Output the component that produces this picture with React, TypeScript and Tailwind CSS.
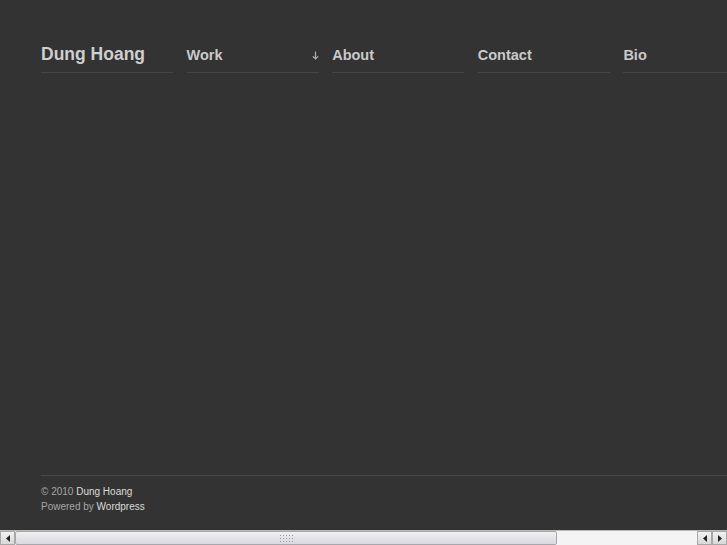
export default function App() {
  const nav = ["Work", "About", "Contact", "Bio", ""];

  return (
    <div className="w-[727px] h-[545px] overflow-hidden flex flex-col bg-[#333333]">
      <div className="h-[530px] overflow-hidden">
        <div
          className="w-[914px] h-[530px] bg-[#333333] flex flex-col pl-[41px]"
          style={{ fontFamily: '"Liberation Sans", Arial, sans-serif' }}
        >
          {/* Header */}
          <header className="pt-[44px] grid grid-cols-[repeat(6,132px)] gap-x-[13.6px]">
            <div className="border-b border-[#464646] pb-[8px]">
              <span className="block text-[17.5px] leading-[20px] font-bold text-[#cfcfcf]">Dung Hoang</span>
            </div>
            {nav.map((item, i) => (
              <div key={i} className="border-b border-[#464646] pb-[7px] pt-[1px] flex items-center justify-between">
                <span className="text-[14.5px] leading-[20px] font-bold text-[#c9c9c9]">{item}&nbsp;</span>
                {item === "Work" && (
                  <svg width="7" height="9" viewBox="0 0 7 9" className="mt-[1px]">
                    <path d="M3.5 0.5V8M0.8 5.3L3.5 8L6.2 5.3" stroke="#b0b0b0" strokeWidth="1.2" fill="none" />
                  </svg>
                )}
              </div>
            ))}
          </header>

          <div className="flex-1" />

          {/* Footer */}
          <footer className="border-t border-[#484848] pt-[8px] pb-[16px] text-[10px] leading-[15px] text-[#a6a6a6]">
            <p>
              © 2010 <span className="text-[#dcdcdc]">Dung Hoang</span>
            </p>
            <p>
              Powered by <span className="text-[#dcdcdc]">Wordpress</span>
            </p>
          </footer>
        </div>
      </div>

      {/* horizontal scrollbar */}
      <div className="h-[15px] flex bg-[#f4f4f4] border-t border-[#b8b8b8]">
        <div className="w-[15px] flex items-center justify-center bg-gradient-to-b from-[#f2f2f2] to-[#d8d8d8] border border-[#a8a8a8]">
          <svg width="4" height="7" viewBox="0 0 4 7"><path d="M4 0L0 3.5L4 7Z" fill="#222" /></svg>
        </div>
        <div className="flex-1 flex">
          <div className="w-[542px] flex items-center justify-center bg-gradient-to-b from-[#f0f0f2] to-[#d9d9de] border border-[#a8a8ac] rounded-[2px]">
            <div className="grid grid-cols-5 gap-[2px]">
              {Array.from({ length: 15 }).map((_, i) => (
                <div key={i} className="w-[1px] h-[1px] bg-[#9a9a9a]" />
              ))}
            </div>
          </div>
        </div>
        <div className="w-[15px] flex items-center justify-center bg-gradient-to-b from-[#f2f2f2] to-[#d8d8d8] border border-[#a8a8a8]">
          <svg width="4" height="7" viewBox="0 0 4 7"><path d="M4 0L0 3.5L4 7Z" fill="#222" /></svg>
        </div>
        <div className="w-[15px] flex items-center justify-center bg-gradient-to-b from-[#f2f2f2] to-[#d8d8d8] border border-[#a8a8a8]">
          <svg width="4" height="7" viewBox="0 0 4 7"><path d="M0 0L4 3.5L0 7Z" fill="#222" /></svg>
        </div>
      </div>
    </div>
  );
}
